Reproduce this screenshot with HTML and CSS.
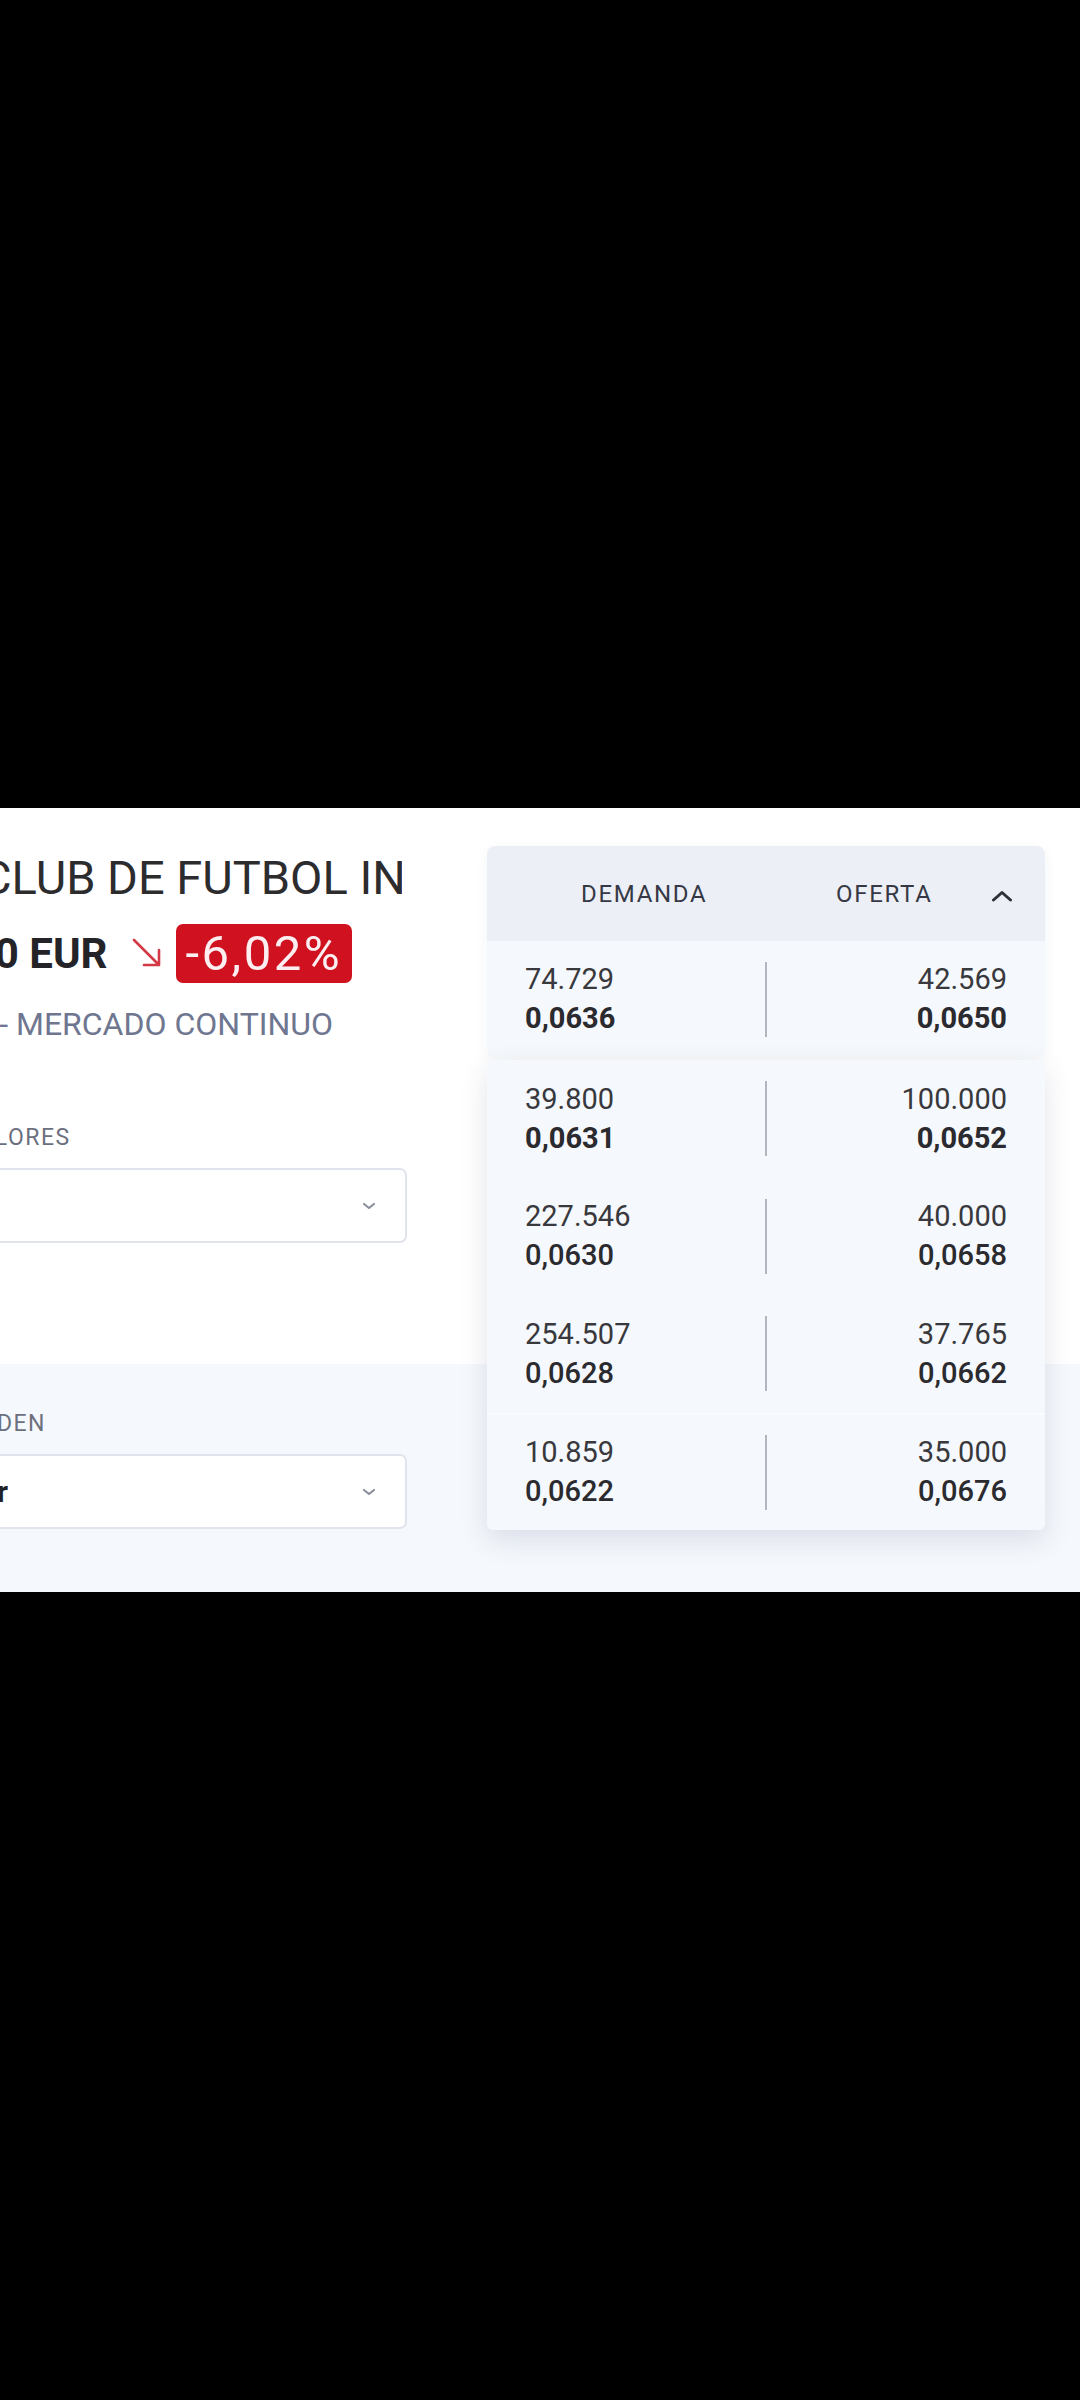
FILE: index.html
```html
<!DOCTYPE html>
<html lang="es">
<head>
<meta charset="utf-8">
<title>Club de Futbol Intercity</title>
<link rel="stylesheet" href="styles.css">
</head>
<body>
<main class="screen">
  <section class="top">
    <div class="left">
      <h1 class="title">CLUB DE FUTBOL INTERCITY</h1>
      <div class="price-row">
        <span class="price">0,0640 EUR</span>
        <svg class="arrow" viewBox="0 0 32 32" aria-hidden="true"><path d="M3 3 L28 28 M13 28 H28 V13" fill="none" stroke="#d43a46" stroke-width="2.6" stroke-linecap="round" stroke-linejoin="round"/></svg>
        <span class="badge">-6,02%</span>
      </div>
      <div class="market">CFI - MERCADO CONTINUO</div>
      <div class="label label-valores">VALORES</div>
      <div class="select select-valores">
        <span class="select-value"></span>
        <svg class="chev" viewBox="0 0 14 8" aria-hidden="true"><path d="M2 2 L7 6 L12 2" fill="none" stroke="#8b909d" stroke-width="2.2" stroke-linecap="round" stroke-linejoin="round"/></svg>
      </div>
    </div>
    <div class="right">
      <div class="ob">
        <div class="ob-head">
          <span class="h-dem">DEMANDA</span>
          <span class="h-ofe">OFERTA</span>
          <svg class="caret" viewBox="0 0 22 12" aria-hidden="true"><path d="M2.5 10 L11 2.5 L19.5 10" fill="none" stroke="#2f313a" stroke-width="3" stroke-linecap="round" stroke-linejoin="round"/></svg>
        </div>
        <div class="ob-row first">
          <div class="bid"><div class="qty">74.729</div><div class="px strong">0,0636</div></div>
          <div class="vline"></div>
          <div class="ask"><div class="qty">42.569</div><div class="px strong">0,0650</div></div>
        </div>
        <div class="ob-drop">
          <div class="ob-row">
            <div class="bid"><div class="qty">39.800</div><div class="px strong">0,0631</div></div>
            <div class="vline"></div>
            <div class="ask"><div class="qty">100.000</div><div class="px strong">0,0652</div></div>
          </div>
          <div class="ob-row">
            <div class="bid"><div class="qty">227.546</div><div class="px">0,0630</div></div>
            <div class="vline"></div>
            <div class="ask"><div class="qty">40.000</div><div class="px">0,0658</div></div>
          </div>
          <div class="ob-row">
            <div class="bid"><div class="qty">254.507</div><div class="px">0,0628</div></div>
            <div class="vline"></div>
            <div class="ask"><div class="qty">37.765</div><div class="px">0,0662</div></div>
          </div>
          <div class="ob-row sep">
            <div class="bid"><div class="qty">10.859</div><div class="px">0,0622</div></div>
            <div class="vline"></div>
            <div class="ask"><div class="qty">35.000</div><div class="px">0,0676</div></div>
          </div>
        </div>
      </div>
    </div>
  </section>
  <section class="bottom">
    <div class="left">
      <div class="label label-orden">TIPO DE ORDEN</div>
      <div class="select select-orden">
        <span class="select-value">Comprar</span>
        <svg class="chev" viewBox="0 0 14 8" aria-hidden="true"><path d="M2 2 L7 6 L12 2" fill="none" stroke="#8b909d" stroke-width="2.2" stroke-linecap="round" stroke-linejoin="round"/></svg>
      </div>
    </div>
  </section>
</main>
</body>
</html>
```

FILE: styles.css
```css
html, body {
  margin: 0;
  background: #000;
}
body {
  font-family: Roboto, "Liberation Sans", Arial, sans-serif;
  width: 1080px;
  height: 2400px;
  overflow: hidden;
}
.screen {
  display: block;
  margin-top: 808px;
  width: 1080px;
  height: 784px;
  background: #fff;
  overflow: hidden;
}
.top {
  display: flex;
  height: 556px;
  background: #fff;
}
.left {
  width: 407px;
  flex: none;
}
.top .left {
  padding-top: 40px;
}
.title {
  margin: 0 0 0 -19px;
  width: 421px;
  overflow: hidden;
  white-space: nowrap;
  font-size: 47px;
  line-height: 60px;
  font-weight: 400;
  color: #2c2c2e;
}
.price-row {
  display: flex;
  align-items: center;
  height: 60px;
  margin-top: 15px;
  margin-left: -112px;
  white-space: nowrap;
}
.price {
  font-size: 42px;
  font-weight: 700;
  color: #242428;
}
.arrow {
  width: 32px;
  height: 32px;
  margin-left: 24px;
  flex: none;
}
.badge {
  margin-left: 13px;
  height: 59px;
  display: inline-flex;
  align-items: center;
  padding: 0 10px 0 9px;
  border-radius: 7px;
  background: #d0111f;
  color: #fdeff1;
  font-size: 49px;
  letter-spacing: 2.5px;
}
.market {
  margin-top: 19px;
  margin-left: -56px;
  white-space: nowrap;
  font-size: 32px;
  line-height: 44px;
  color: #6f7690;
}
.label {
  white-space: nowrap;
  font-size: 23px;
  line-height: 30px;
  letter-spacing: 1.5px;
  color: #6c707e;
}
.label-valores {
  margin-top: 77px;
  margin-left: -37px;
}
.select {
  margin-top: 15px;
  margin-left: -140px;
  height: 75px;
  box-sizing: border-box;
  border: 2px solid #e1e4ed;
  border-radius: 7px;
  background: #fff;
  display: flex;
  align-items: center;
  justify-content: space-between;
  padding: 0 29px 0 29px;
}
.select-value {
  font-size: 30px;
  font-weight: 700;
  color: #222226;
  white-space: nowrap;
}
.chev {
  width: 14px;
  height: 8px;
  flex: none;
}
.right {
  margin-left: 80px;
  width: 558px;
  flex: none;
  padding-top: 38px;
}
.ob {
  position: relative;
  border-radius: 8px;
  box-shadow: 0 4px 14px rgba(35, 50, 95, 0.05);
}
.ob-head {
  height: 95px;
  display: flex;
  align-items: center;
  padding-left: 94px;
  background: #eceff5;
  border-radius: 8px 8px 0 0;
  font-size: 24px;
  letter-spacing: 1.7px;
  color: #363945;
}
.h-dem {
  width: 255px;
  flex: none;
}
.h-ofe {
  width: 155px;
  flex: none;
}
.caret {
  width: 22px;
  height: 12px;
  flex: none;
  margin-top: 4px;
}
.ob-row {
  height: 116px;
  box-sizing: border-box;
  display: grid;
  grid-template-columns: 1fr 2px 1fr;
  align-items: center;
  padding: 0 38px;
  background: #f5f8fc;
}
.ob-row.first {
  border-radius: 0 0 6px 6px;
}
.bid {
  text-align: left;
}
.ask {
  text-align: right;
}
.qty, .px {
  font-size: 29px;
  line-height: 39px;
  color: #38383d;
}
.px {
  font-weight: 500;
  color: #2a2a2f;
}
.px.strong {
  font-weight: 700;
}
.vline {
  width: 2px;
  height: 75px;
  background: #b2b6c1;
}
.ob-drop {
  position: absolute;
  top: calc(100% + 3px);
  left: 0;
  right: 0;
  z-index: 2;
  background: #f5f8fc;
  border-radius: 6px;
  box-shadow: 0 10px 28px rgba(35, 50, 95, 0.13);
}
.ob-drop .ob-row {
  height: 117.5px;
  background: transparent;
}
.ob-drop .ob-row.sep {
  border-top: 2px solid #fbfcfe;
}
.bottom {
  height: 228px;
  box-sizing: border-box;
  padding-top: 45px;
  background: #f5f8fc;
}
.label-orden {
  margin-left: -138px;
}
```
